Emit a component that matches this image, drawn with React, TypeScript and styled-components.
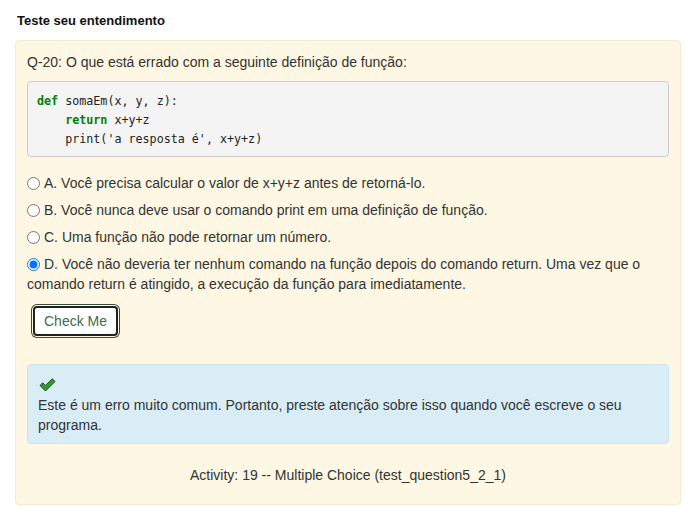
import React from "react";
import styled, { createGlobalStyle } from "styled-components";

const Global = createGlobalStyle`
  html, body { margin: 0; padding: 0; background: #ffffff; }
  body { font-family: "Liberation Sans", Arial, sans-serif; color: #333333; }
`;

const Page = styled.div`
  padding: 12px 5px 2px 15px;
  width: 686px;
  box-sizing: border-box;
`;

const Title = styled.h3`
  margin: 0 0 10px 2px;
  font-size: 13px;
  line-height: 18px;
  font-weight: bold;
  color: #111111;
`;

const Panel = styled.div`
  background: #fdf7e3;
  border: 1px solid #f4ecd2;
  border-radius: 4px;
  padding: 11px 11px 19px 11px;
  display: flex;
  flex-direction: column;
`;

const Question = styled.p`
  margin: 0 0 9px 0;
  font-size: 14px;
  line-height: 20px;
`;

const Code = styled.pre`
  margin: 0 0 16px 0;
  background: #f4f4f4;
  border: 1px solid #cccccc;
  border-radius: 4px;
  padding: 10px 9px 7px 9px;
  font-family: "DejaVu Sans Mono", "Liberation Mono", monospace;
  font-size: 11.7px;
  line-height: 19px;
  color: #222222;
`;

const Kw = styled.span`
  color: #008000;
  font-weight: bold;
`;

const Options = styled.div`
  display: flex;
  flex-direction: column;
  gap: 7px;
`;

const Option = styled.label`
  display: block;
  font-size: 14px;
  line-height: 20px;
  color: #333333;
`;

const Radio = styled.input`
  margin: 0 4px 0 0;
  width: 13px;
  height: 13px;
  vertical-align: -2px;
`;

const ButtonRow = styled.div`
  margin: 10px 0 0 4px;
  display: flex;
`;

const CheckButton = styled.button`
  font-family: "Liberation Sans", Arial, sans-serif;
  font-size: 14px;
  line-height: 20px;
  color: #3f6b4c;
  background: #ffffff;
  border: 2px solid #1c241c;
  border-radius: 4px;
  padding: 3px 9px;
  margin: 2px;
  box-shadow: 0 0 0 1px #fdf7e3, 0 0 0 2px #3a4a3a;
  cursor: pointer;
`;

const Feedback = styled.div`
  margin: 26px 0 0 0;
  background: #d9edf7;
  border: 1px solid #c9e4ef;
  border-radius: 4px;
  padding: 10px 10px 8px 10px;
  font-size: 14px;
  line-height: 20px;
  color: #333333;
`;

const CheckIcon = styled.svg`
  display: block;
  margin: 3px 0 3px 1px;
`;

const Footer = styled.div`
  margin-top: 21px;
  text-align: center;
  font-size: 14px;
  line-height: 20px;
  color: #333333;
`;

const options = [
  "A. Você precisa calcular o valor de x+y+z antes de retorná-lo.",
  "B. Você nunca deve usar o comando print em uma definição de função.",
  "C. Uma função não pode retornar um número.",
  "D. Você não deveria ter nenhum comando na função depois do comando return. Uma vez que o comando return é atingido, a execução da função para imediatamente.",
];

export default function App() {
  return (
    <>
      <Global />
      <Page>
        <Title>Teste seu entendimento</Title>
        <Panel>
          <Question>Q-20: O que está errado com a seguinte definição de função:</Question>
          <Code>
            <Kw>def</Kw> somaEm(x, y, z):{"\n"}
            {"    "}<Kw>return</Kw> x+y+z{"\n"}
            {"    "}print('a resposta é', x+y+z)
          </Code>
          <Options>
            {options.map((o, i) => (
              <Option key={i}>
                <Radio type="radio" name="q20" defaultChecked={i === 3} />
                {o}
              </Option>
            ))}
          </Options>
          <ButtonRow>
            <CheckButton>Check Me</CheckButton>
          </ButtonRow>
          <Feedback>
            <CheckIcon width="17" height="14" viewBox="0 0 17 14">
              <path
                d="M1 7.5 L3.8 4.8 L6.5 7.4 L13.2 0.8 L16 3.5 L6.5 13 Z"
                fill="#2f9b2f"
                stroke="#1d4d1d"
                strokeWidth="1"
                strokeLinejoin="round"
              />
            </CheckIcon>
            Este é um erro muito comum. Portanto, preste atenção sobre isso quando você escreve o seu programa.
          </Feedback>
          <Footer>Activity: 19 -- Multiple Choice (test_question5_2_1)</Footer>
        </Panel>
      </Page>
    </>
  );
}
